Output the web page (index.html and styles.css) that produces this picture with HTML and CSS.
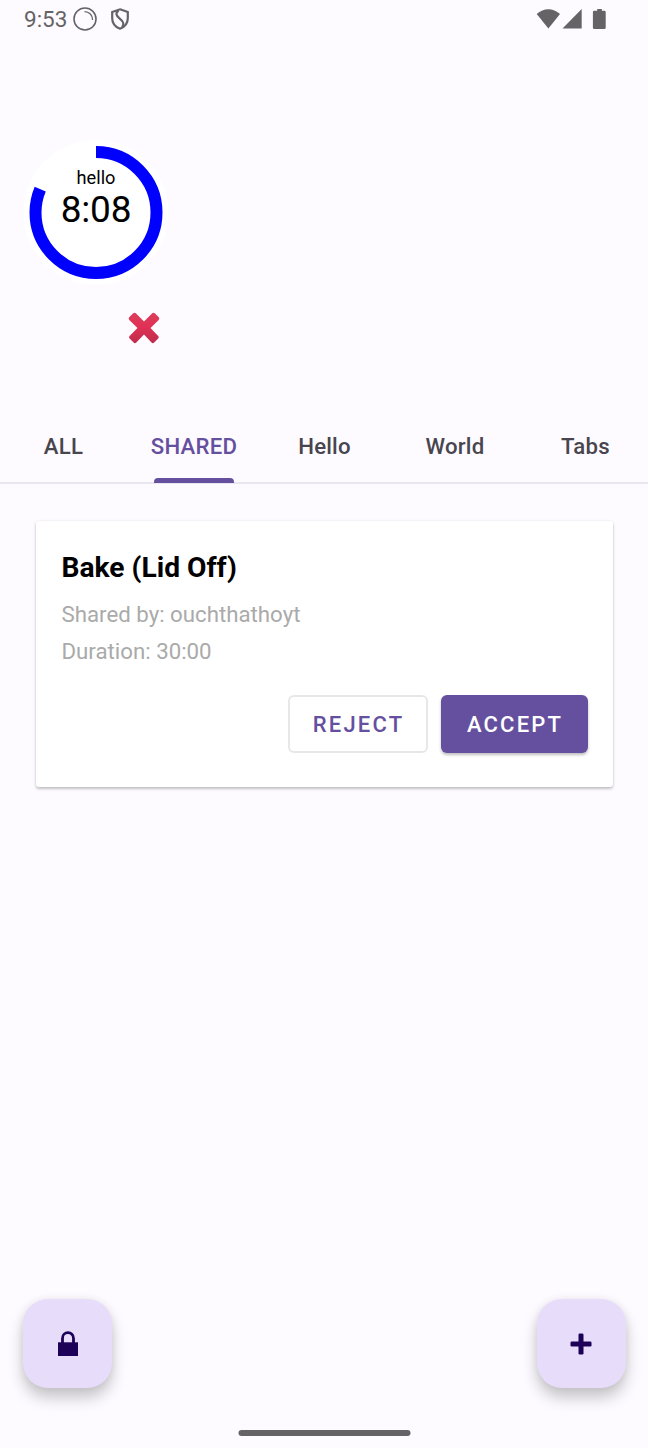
FILE: index.html
```html
<!DOCTYPE html>
<html lang="en">
<head>
<meta charset="utf-8">
<title>Timers</title>
<link rel="stylesheet" href="styles.css">
</head>
<body>
<div class="screen">
  <header class="status">
    <span class="clock">9:53</span>
    <svg class="ring-icon" width="24" height="24" viewBox="0 0 24 24" fill="none" stroke="#656366"><circle cx="12" cy="12" r="11" stroke-width="1.6"/><path d="M11.500 4.600A8 8 0 0 1 19.600 13" stroke-width="1.300"/></svg>
    <svg class="shield" width="18" height="22" viewBox="0 0 18 22" fill="none" stroke="#656366" stroke-width="2.200"><path d="M9 1.300 16.800 4v6.200c0 5-3 8.700-7.800 10.500C4.200 18.900 1.200 15.200 1.200 10.200V4Z"/><path d="M7.500 2.500C4.200 5 5 7.500 8.500 10.300c3.500 2.700 5.200 5 2.700 8.700"/></svg>
    <svg class="system" width="72" height="24" viewBox="0 0 72 24" fill="#656366"><path d="M.7 6C7.500-.3 17.200-.3 24 6L12.400 20.500Z"/><path d="M26.500 20.500 45.700 1v19.500Z"/><path d="M58.300 2.800h2.900V1h4.700v1.800h2.400q1.400 0 1.400 1.400v15.500q0 1.400-1.400 1.400H58.300q-1.400 0-1.400-1.400V4.200q0-1.400 1.400-1.400Z"/></svg>
  </header>

  <section class="timer">
    <div class="dial">
      <svg class="progress" width="145" height="145" viewBox="0 0 145 145"><circle cx="72.500" cy="72.500" r="72.500" fill="#fff"/><circle cx="72.500" cy="72.500" r="60.500" fill="none" stroke="#00f" stroke-width="12" pathLength="600" stroke-dasharray="488 112" transform="rotate(-90 72.500 72.500)"/></svg>
      <div class="dial-text"><span class="name">hello</span><span class="time">8:08</span></div>
    </div>
    <svg class="cancel" width="32" height="32" viewBox="0 0 32 32"><defs><linearGradient id="red" x1="0" y1="0" x2="0" y2="1"><stop offset="0" stop-color="#dc3e5c"/><stop offset=".48" stop-color="#e03055"/><stop offset="1" stop-color="#bd2d4c"/></linearGradient></defs><path d="M1.200 5.200 5.200 1.200Q6.700.2 8.100 1.600L16 9.600l8-8Q25.300.2 26.800 1.200l4 4Q32 6.500 30.700 7.900L22.500 16l7.700 7.900q1.300 1.400 0 2.700l-4 4q-1.400 1.200-2.700 0L16 22.600l-7.700 8q-1.400 1.200-2.700 0l-4-4q-1.200-1.300 0-2.700L9.500 16 1.300 7.900Q0 6.500 1.200 5.200Z" fill="url(#red)"/></svg>
  </section>

  <nav class="tabs">
    <a class="tab">ALL</a>
    <a class="tab active"><span>SHARED</span></a>
    <a class="tab">Hello</a>
    <a class="tab">World</a>
    <a class="tab">Tabs</a>
  </nav>

  <main class="content">
    <article class="card">
      <h1 class="title">Bake (Lid Off)</h1>
      <p class="detail">Shared by: ouchthathoyt</p>
      <p class="detail duration">Duration: 30:00</p>
      <div class="actions">
        <button class="btn reject">REJECT</button>
        <button class="btn accept">ACCEPT</button>
      </div>
    </article>
  </main>

  <footer class="fabs">
    <button class="fab" aria-label="Lock"><svg width="20" height="26" viewBox="0 0 20 26"><path d="M4.500 13V7.200a5.500 5.500 0 0 1 11 0V13" fill="none" stroke="#1d0058" stroke-width="2.800"/><path d="M0 11.300h20V25H0Z" fill="#1d0058"/></svg></button>
    <button class="fab" aria-label="Add"><svg class="plus" width="22" height="22" viewBox="0 0 22 22" fill="#1d0058"><rect x="8.500" y=".5" width="5" height="21" rx="1.200"/><rect x=".5" y="8.500" width="21" height="5" rx="1.200"/></svg></button>
  </footer>
  <div class="home"></div>
</div>
</body>
</html>
```
FILE: styles.css
```css
* { box-sizing: border-box; }
body { margin: 0; background: #fdfbff; font-family: Roboto, sans-serif; }
button { font-family: inherit; padding: 0; border: 0; }
svg { display: block; flex: none; }
.screen { width: 648px; height: 1448px; display: flex; flex-direction: column; overflow: hidden; }

.status { height: 38px; display: flex; align-items: center; padding: 0 40px 0 24px; color: #656366; }
.clock { width: 49px; font-size: 22.5px; line-height: 38px; }
.shield { margin-left: 14px; }
.system { margin: 1px 0 0 auto; }

.timer { height: 370px; padding: 101.500px 0 0 23.500px; }
.dial { width: 145px; height: 145px; display: grid; }
.progress, .dial-text { grid-area: 1 / 1; }
.progress { transform: translate(-.5px, 0); }
.dial-text { z-index: 1; display: flex; flex-direction: column; align-items: center; padding-top: 27px; color: #000; }
.name { font-size: 18.200px; line-height: 22px; }
.time { font-size: 37px; line-height: 41px; letter-spacing: -.200px; }
.cancel { margin: 27.500px 0 0 104.800px; }

.tabs { height: 76px; flex: none; display: grid; grid-template-columns: repeat(5, 130.500px); margin-left: -1.800px; border-bottom: 2px solid #e9e6f0; }
.tab { display: flex; flex-direction: column; align-items: center; height: 75px; font-size: 22.200px; font-weight: 500; line-height: 76px; color: #48454e; letter-spacing: .200px; }
.active { color: #6550a0; }
.active::after { content: ""; width: 80px; height: 5px; margin-top: -6px; flex: none; border-radius: 4px 4px 0 0; background: #6550a0; }

.content { padding: 37px 35px 0 36px; }
.card { height: 266px; padding: 31px 25.500px 34px; border-radius: 3px; background: #fff; box-shadow: 0 2px 3px rgba(0,0,0,.22), 0 0 3px rgba(0,0,0,.08); }
.title { margin: 0; font-size: 28.200px; line-height: 32px; font-weight: 700; color: #000; }
.detail { margin: 16px 0 0; font-size: 22.250px; line-height: 28px; color: #aaa; }
.duration { margin-top: 9px; }
.actions { display: flex; justify-content: flex-end; gap: 13px; margin-top: 29.500px; }
.btn { height: 58px; border-radius: 6px; font-size: 22px; font-weight: 500; letter-spacing: 2.200px; text-indent: 1.500px; }
.reject { width: 140.500px; line-height: 56px; color: #6550a0; background: #fff; border: 2px solid #e7e7e7; }
.accept { width: 146.500px; padding-top: 1px; line-height: 58px; color: #fff; background: #6550a0; box-shadow: 0 2px 3px rgba(0,0,0,.26); }

.fabs { display: flex; justify-content: space-between; height: 115px; flex: none; margin-top: auto; padding: 0 22px 0 23px; clip-path: inset(-20px 0 0); }
.fab { width: 89px; height: 89px; display: grid; place-items: center; border-radius: 25px; background: #e7ddfb; box-shadow: 0 10px 15px rgba(0,0,0,.21), 0 0 8px rgba(0,0,0,.07); }
.plus { margin: 0 1px 0 0; }
.home { width: 172px; height: 6px; margin: 16px auto 12px; flex: none; border-radius: 3px; background: #656366; transform: translateX(.5px); }
```
